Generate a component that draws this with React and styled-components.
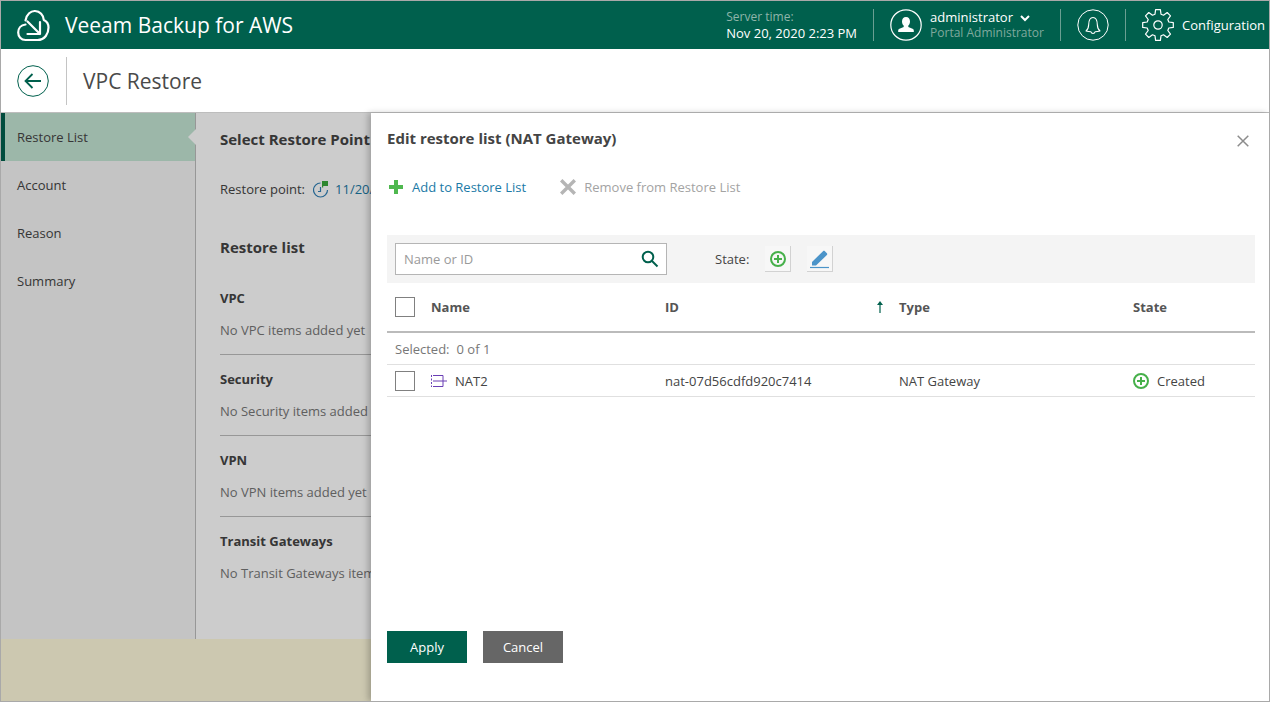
import React from "react";
import styled, { createGlobalStyle } from "styled-components";

const GREEN = "#00604d";

const Global = createGlobalStyle`
  * { box-sizing: border-box; }
  html, body { margin: 0; padding: 0; background: #fff; }
  body { font-family: "Open Sans", "Noto Sans", sans-serif; font-size: 13px; color: #444; }
`;

const Frame = styled.div`
  width: 1270px;
  height: 702px;
  border: 1px solid #a9a9a9;
  display: flex;
  flex-direction: column;
  overflow: hidden;
`;

const Header = styled.header`
  flex: none;
  height: 48px;
  background: ${GREEN};
  color: #fff;
  display: flex;
  align-items: center;
  padding-left: 16px;
`;

const Brand = styled.div`
  font-size: 21px;
  margin-left: 15px;
  flex: 1;
  white-space: nowrap;
`;

const ServerTime = styled.div`
  line-height: 16px;
  padding-right: 16px;
  div:first-child { font-size: 12px; color: #8fb5aa; }
`;

const Sep = styled.div`
  width: 1px;
  height: 32px;
  background: #6a9f92;
`;

const UserBlock = styled.div`
  display: flex;
  align-items: center;
  padding: 0 16px;
  gap: 8px;
`;

const UserText = styled.div`
  line-height: 15px;
  width: 114px;
  white-space: nowrap;
  span { margin-right: 7px; }
  div:last-child { color: #7fa99d; font-size: 12px; }
`;

const BellBlock = styled.div`
  padding: 0 16px;
  display: flex;
`;

const ConfigBlock = styled.div`
  display: flex;
  align-items: center;
  gap: 8px;
  padding: 0 4px 0 16px;
  white-space: nowrap;
`;

const PageBar = styled.div`
  flex: none;
  height: 64px;
  border-bottom: 1px solid #bdbdbd;
  display: flex;
  align-items: center;
  padding-left: 16px;
`;

const BackSep = styled.div`
  width: 1px;
  height: 48px;
  background: #c4c4c4;
  margin: 0 16px 0 17px;
`;

const PageTitle = styled.h1`
  margin: 0;
  font-size: 21px;
  font-weight: 400;
  color: #4a4a4a;
`;

const Main = styled.div`
  flex: 1;
  position: relative;
  display: flex;
  flex-direction: column;
  min-height: 0;
`;

const Wizard = styled.div`
  flex: 1;
  display: flex;
  min-height: 0;
`;

const Steps = styled.nav`
  flex: none;
  width: 195px;
  background: #f5f5f5;
  border-right: 1px solid #bdbdbd;
`;

const Step = styled.div`
  position: relative;
  height: 48px;
  line-height: 48px;
  padding-left: ${(p) => (p.$active ? "12px" : "16px")};
  ${(p) => p.$active && `
    background: #c4e5d4;
    border-left: 4px solid ${GREEN};
    &::after {
      content: "";
      position: absolute;
      right: -1px;
      top: 16px;
      border: 8px solid transparent;
      border-left: 0;
      border-right-color: #fff;
    }
  `}
`;

const Content = styled.section`
  flex: 1;
  padding: 16px 24px;
  background: #fff;
  white-space: nowrap;
`;

const SectionTitle = styled.h2`
  margin: 0;
  font-size: 15px;
  font-weight: 700;
  line-height: 20px;
`;

const RestorePoint = styled.div`
  display: flex;
  align-items: center;
  gap: 8px;
  margin-top: 30px;
  height: 20px;
  a { color: #1b7aa6; margin-left: -2px; }
`;

const ListTitle = styled(SectionTitle)`
  margin: 38px 0 17px;
`;

const Group = styled.div`
  height: 81px;
  padding-top: 15px;
  width: 176px;
  border-bottom: 1px solid ${(p) => (p.$last ? "transparent" : "#bdbdbd")};
  b { display: block; line-height: 18px; }
  p { margin: 14px 0 0; line-height: 18px; color: #777; }
`;

const Banner = styled.div`
  flex: none;
  height: 62px;
  background: #fffadc;
`;

const Dim = styled.div`
  position: absolute;
  inset: 0;
  background: rgba(0, 0, 0, 0.2);
`;

const Drawer = styled.aside`
  position: absolute;
  top: 0;
  right: 0;
  bottom: 0;
  width: 898px;
  background: #fff;
  box-shadow: -3px 0 6px rgba(0, 0, 0, 0.22);
  padding: 0 14px 38px 16px;
  display: flex;
  flex-direction: column;
`;

const DrawerHead = styled.div`
  display: flex;
  align-items: flex-start;
  justify-content: space-between;
  padding-top: 15px;
  height: 63px;
  h2 { margin: 0; font-size: 15px; line-height: 20px; font-weight: 700; }
  svg { margin: 7px 6px 0 0; }
`;

const Actions = styled.div`
  display: flex;
  align-items: center;
  height: 22px;
  padding-left: 2px;
`;

const Action = styled.div`
  display: flex;
  align-items: center;
  gap: ${(p) => (p.$off ? "8px" : "9px")};
  margin-right: 34px;
  color: ${(p) => (p.$off ? "#a3a3a3" : "#1b7aa6")};
`;

const Filter = styled.div`
  margin-top: 37px;
  height: 48px;
  background: #f4f4f4;
  display: flex;
  align-items: center;
  padding-left: 8px;
`;

const SearchBox = styled.div`
  width: 272px;
  height: 32px;
  background: #fff;
  border: 1px solid #b5b5b5;
  display: flex;
  align-items: center;
  justify-content: space-between;
  padding: 0 7px 0 8px;
  color: #9a9a9a;
`;

const StateLabel = styled.span`
  margin: 0 16px 0 48px;
`;

const FilterBtn = styled.div`
  width: 26px;
  height: 26px;
  margin-right: 16px;
  background: #f7f7f7;
  border-right: 1px solid #d2d2d2;
  border-bottom: 1px solid #d2d2d2;
  display: flex;
  align-items: center;
  justify-content: center;
`;

const Row = styled.div`
  display: grid;
  grid-template-columns: 44px 234px 234px 234px 1fr;
  align-items: center;
  height: ${(p) => p.$h || 32}px;
  border-bottom: ${(p) => (p.$head ? "2px solid #bbb" : "1px solid #e0e0e0")};
  font-weight: ${(p) => (p.$head ? 700 : 400)};
  color: ${(p) => (p.$head ? "#555" : "#444")};
`;

const Check = styled.div`
  width: 20px;
  height: 20px;
  margin-left: 8px;
  border: 1px solid #808080;
  background: #fff;
`;

const IconCell = styled.div`
  display: flex;
  align-items: center;
  gap: 8px;
`;

const SortCell = styled.div`
  display: flex;
  justify-content: space-between;
  padding-right: 15px;
  align-items: center;
`;

const SelectedRow = styled.div`
  height: 32px;
  padding-left: 8px;
  line-height: 33px;
  border-bottom: 1px solid #e0e0e0;
  color: #777;
  span { margin-left: 7px; }
`;

const Footer = styled.div`
  margin-top: auto;
  display: flex;
  gap: 16px;
`;

const Button = styled.button`
  width: 80px;
  height: 32px;
  border: 0;
  color: #fff;
  font: inherit;
  background: ${(p) => (p.$primary ? GREEN : "#666")};
`;

const gearPath = (() => {
  const pts = [];
  const teeth = 8;
  for (let i = 0; i < teeth; i++) {
    const a = (i / teeth) * Math.PI * 2 - Math.PI / 2;
    const step = (Math.PI * 2) / teeth;
    [[-0.3, 11.2], [-0.17, 15.5], [0.17, 15.5], [0.3, 11.2]].forEach(([o, r]) => {
      const t = a + o * step * 1.15;
      pts.push(`${(16 + r * Math.cos(t)).toFixed(1)} ${(16 + r * Math.sin(t)).toFixed(1)}`);
    });
  }
  return "M" + pts.join("L") + "Z";
})();

const Logo = () => (
  <svg width="33" height="33" viewBox="0 0 33 33" fill="none" stroke="#fff" strokeWidth="2.2" strokeLinecap="round" strokeLinejoin="round">
    <path d="M8.500 11.500C9.500 5 14 1.800 18 2c5 .2 8.500 4 8.800 9 3 1.400 4.700 4.200 4.700 7.500 0 6-3.500 12.500-11 12.500H8.500C4 31 1.200 27.500 1.200 23.500c0-4 2.600-7.500 7.300-8" />
    <path d="M10.500 12.500 23 25M10.500 25H23V13" />
  </svg>
);

const Avatar = () => (
  <svg width="32" height="32" viewBox="0 0 32 32">
    <circle cx="16" cy="16" r="15.200" fill="none" stroke="#fff" strokeWidth="1.200" />
    <path fill="#fff" d="M16 8c2.600 0 4 2 4 4.400 0 1.800-.8 3.300-1.700 4.200v1.400l4.200 1.800c.9.400 1.300 1 1.300 1.900V23H8.200v-1.300c0-.9.400-1.500 1.300-1.900l4.200-1.800v-1.400c-.9-.9-1.700-2.400-1.700-4.200C12 10 13.400 8 16 8z" />
  </svg>
);

const Bell = () => (
  <svg width="32" height="32" viewBox="0 0 32 32" fill="none" stroke="#fff">
    <circle cx="16" cy="16" r="15.200" strokeWidth="1" />
    <path strokeWidth="1.100" strokeLinejoin="round" d="M9 22c2-1.500 2.600-3.500 2.700-6.500.1-4 1.500-7 4.300-7s4.200 3 4.300 7c.1 3 .7 5 2.700 6.500-1.800.5-3.800.7-4.800.7-.4 1.300-1.200 1.800-2.200 1.800s-1.800-.5-2.200-1.800c-1 0-3-.2-4.800-.7z" />
  </svg>
);

const Gear = () => (
  <svg width="32" height="32" viewBox="0 0 32 32" fill="none" stroke="#fff" strokeWidth="1.200">
    <path d={gearPath} strokeLinejoin="round" />
    <circle cx="16" cy="16" r="4.200" />
  </svg>
);

const BackIcon = () => (
  <svg width="32" height="32" viewBox="0 0 32 32" fill="none" stroke={GREEN}>
    <circle cx="16" cy="16" r="15.300" strokeWidth="1" />
    <path strokeWidth="1.800" d="M24 16H8.500M15.500 9l-7 7 7 7" />
  </svg>
);

const ClockFlag = () => (
  <svg width="16" height="18" viewBox="0 0 16 18" fill="none">
    <path stroke="#2f7fb5" strokeWidth="1.200" d="M7.500 3a7 7 0 1 0 7 7M7.500 7v4.500H5" />
    <path fill="#3aa83a" d="M9 1h6v5h-4.800v1.500H9z" />
  </svg>
);

const Plus = () => (
  <svg width="14" height="14" viewBox="0 0 14 14">
    <path fill="#4fb84f" d="M5 0h4v5h5v4H9v5H5V9H0V5h5z" />
  </svg>
);

const Cross = () => (
  <svg width="16" height="16" viewBox="0 0 16 16">
    <path stroke="#b5b5b5" strokeWidth="3.400" d="M1.200 1.200l13.600 13.600M14.800 1.200L1.200 14.800" />
  </svg>
);

const Close = () => (
  <svg width="12" height="12" viewBox="0 0 12 12">
    <path stroke="#8c8c8c" strokeWidth="1.500" d="M.7.700l10.600 10.600M11.300.700L.7 11.300" />
  </svg>
);

const Search = () => (
  <svg width="18" height="18" viewBox="0 0 18 18" fill="none" stroke={GREEN} strokeWidth="2">
    <circle cx="7" cy="7" r="5.300" />
    <path d="M11 11l5.500 5.500" />
  </svg>
);

const Created = () => (
  <svg width="16" height="16" viewBox="0 0 16 16" fill="none" stroke="#46b04a">
    <circle cx="8" cy="8" r="7" strokeWidth="2" />
    <path strokeWidth="2" d="M8 4v8M4 8h8" />
  </svg>
);

const Pencil = () => (
  <svg width="22" height="20" viewBox="0 0 22 20">
    <path fill="#4b94c9" d="M3 13L14 2.200c.6-.6 1.300-.6 1.900 0l2 2c.5.500.5 1.200 0 1.800L7 16.500H3z" />
    <path stroke="#4b94c9" strokeWidth="1.200" d="M1 18.500h19" />
  </svg>
);

const NatIcon = () => (
  <svg width="16" height="12" viewBox="0 0 16 12" fill="none" stroke="#6a3fb5" strokeWidth="1">
    <path strokeDasharray="2 1.500" d="M.5 0v12" />
    <path d="M2 .5h10v11H2M2 6h14" />
  </svg>
);

const SortUp = () => (
  <svg width="8" height="12" viewBox="0 0 8 12" fill={GREEN}>
    <path d="M4 0l3 4H4.600v8H3.400V4H1z" />
  </svg>
);

const Chevron = () => (
  <svg width="10" height="7" viewBox="0 0 10 7" fill="none" stroke="#fff" strokeWidth="2">
    <path d="M1 1l4 4 4-4" />
  </svg>
);

const groups = [
  ["VPC", "No VPC items added yet"],
  ["Security", "No Security items added yet"],
  ["VPN", "No VPN items added yet"],
  ["Transit Gateways", "No Transit Gateways items added yet"],
];

export default function App() {
  return (
    <Frame>
      <Global />
      <Header>
        <Logo />
        <Brand>Veeam Backup for AWS</Brand>
        <ServerTime>
          <div>Server time:</div>
          <div>Nov 20, 2020 2:23 PM</div>
        </ServerTime>
        <Sep />
        <UserBlock>
          <Avatar />
          <UserText>
            <div>
              <span>administrator</span>
              <Chevron />
            </div>
            <div>Portal Administrator</div>
          </UserText>
        </UserBlock>
        <Sep />
        <BellBlock>
          <Bell />
        </BellBlock>
        <Sep />
        <ConfigBlock>
          <Gear />
          Configuration
        </ConfigBlock>
      </Header>
      <PageBar>
        <BackIcon />
        <BackSep />
        <PageTitle>VPC Restore</PageTitle>
      </PageBar>
      <Main>
        <Wizard>
          <Steps>
            <Step $active>Restore List</Step>
            <Step>Account</Step>
            <Step>Reason</Step>
            <Step>Summary</Step>
          </Steps>
          <Content>
            <SectionTitle>Select Restore Point</SectionTitle>
            <RestorePoint>
              Restore point:
              <ClockFlag />
              <a>11/20/2020</a>
            </RestorePoint>
            <ListTitle>Restore list</ListTitle>
            {groups.map(([name, empty], i) => (
              <Group key={name} $last={i === groups.length - 1}>
                <b>{name}</b>
                <p>{empty}</p>
              </Group>
            ))}
          </Content>
        </Wizard>
        <Banner />
        <Dim />
        <Drawer>
          <DrawerHead>
            <h2>Edit restore list (NAT Gateway)</h2>
            <Close />
          </DrawerHead>
          <Actions>
            <Action>
              <Plus />
              Add to Restore List
            </Action>
            <Action $off>
              <Cross />
              Remove from Restore List
            </Action>
          </Actions>
          <Filter>
            <SearchBox>
              Name or ID
              <Search />
            </SearchBox>
            <StateLabel>State:</StateLabel>
            <FilterBtn>
              <Created />
            </FilterBtn>
            <FilterBtn>
              <Pencil />
            </FilterBtn>
          </Filter>
          <Row $head $h={50}>
            <Check />
            <div>Name</div>
            <SortCell>
              ID
              <SortUp />
            </SortCell>
            <div>Type</div>
            <div>State</div>
          </Row>
          <SelectedRow>
            Selected:<span>0 of 1</span>
          </SelectedRow>
          <Row>
            <Check />
            <IconCell>
              <NatIcon />
              NAT2
            </IconCell>
            <div>nat-07d56cdfd920c7414</div>
            <div>NAT Gateway</div>
            <IconCell>
              <Created />
              Created
            </IconCell>
          </Row>
          <Footer>
            <Button $primary>Apply</Button>
            <Button>Cancel</Button>
          </Footer>
        </Drawer>
      </Main>
    </Frame>
  );
}
